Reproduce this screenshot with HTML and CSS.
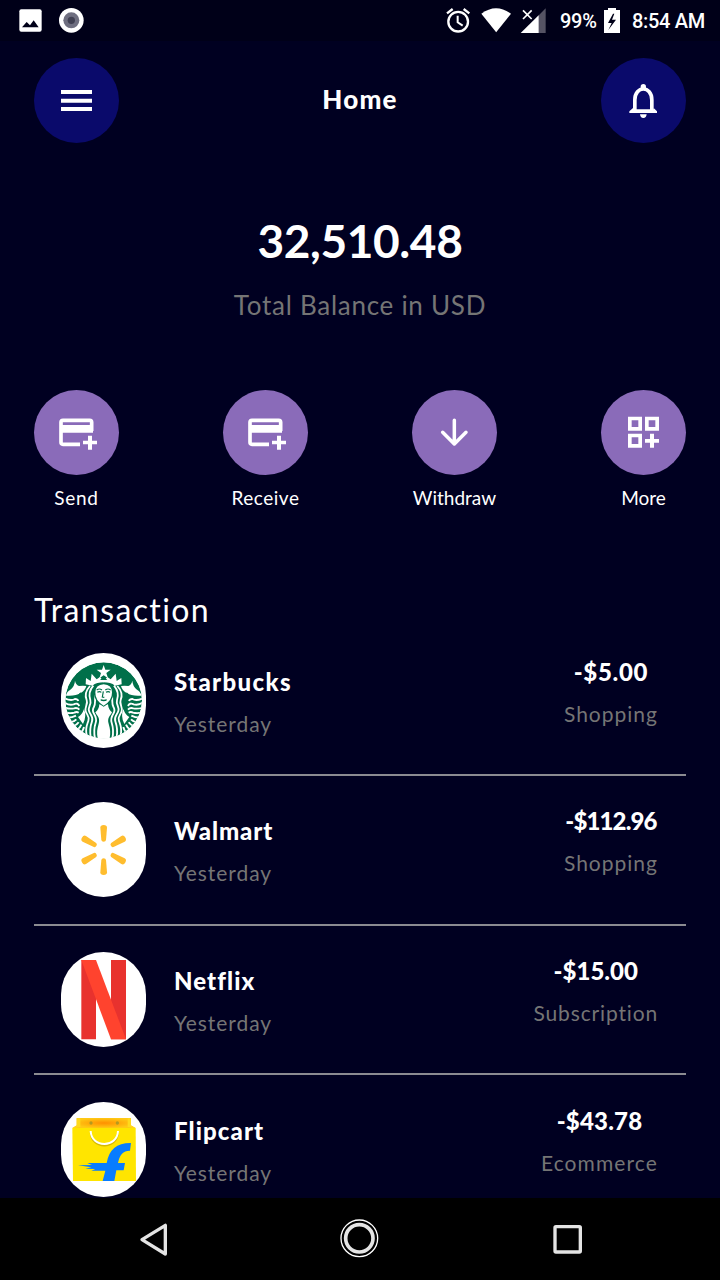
FILE: index.html
```html
<!DOCTYPE html>
<html lang="en">
<head>
<meta charset="utf-8">
<title>Home</title>
<link rel="stylesheet" href="styles.css">
</head>
<body>
<div class="phone">
  <div class="status">
    <svg class="status-left" viewBox="0 0 300 123" width="100" height="41">
      <rect x="58" y="28" width="67" height="67" rx="6" fill="#fff"/>
      <path d="M66 82l14-16 10 10 11-15 15 21z" fill="#000018"/>
      <circle cx="214" cy="61" r="37" fill="#fff"/><circle cx="214" cy="61" r="24" fill="#6f6f80"/><circle cx="214" cy="61" r="11" fill="#414153"/>
    </svg>
    <svg class="status-icons" viewBox="40 0 315 123" width="105" height="41">
      <g fill="none" stroke="#fff"><circle cx="85.500" cy="65" r="29.500" stroke-width="7"/><path d="M84 47v20l15 10" stroke-width="6"/><path d="M52 40l17-13M119 40l-17-13" stroke-width="7"/></g>
      <path d="M155 41Q199 8 244 41L199.500 97z" fill="#fff"/>
      <path d="M348 25v74h-22V47z" fill="#555364"/><path d="M273 99l54-53v53z" fill="#fff"/>
      <path d="M280 31l26 26M306 31l-26 26" stroke="#fff" stroke-width="5"/>
    </svg>
    <span class="status-text percent">99%</span>
    <svg class="battery" viewBox="522 0 48 123" width="16" height="41">
      <path d="M522 30h12v-6h24v6h12v69h-48z" fill="#fff"/><path d="M549 41l-15 28h11l-10 21 23-31h-12l7-18z" fill="#000018"/>
    </svg>
    <span class="status-text clock">8:54 AM</span>
  </div>

  <div class="header">
    <div class="round">
      <svg viewBox="102 174 255 255" width="85" height="85"><path d="M183 270h93v12h-93zM183 296h93v12h-93zM183 321h93v12h-93z" fill="#fff"/></svg>
    </div>
    <h1 class="title">Home</h1>
    <div class="round">
      <svg viewBox="513 174 255 255" width="85" height="85">
        <path d="M614.500 331V300C614.500 256 665.500 256 665.500 300V331" fill="none" stroke="#fff" stroke-width="11"/>
        <path d="M598 339v-5l11-10v4h62v-4l10 10v5zM630 343h20q-1 11-10 11t-10-11z" fill="#fff"/><path d="M632 268v-8a8 8 0 0 1 16 0v8z" fill="#fff"/>
      </svg>
    </div>
  </div>

  <div class="balance">
    <div class="amount">32,510.48</div>
    <div class="caption">Total Balance in USD</div>
  </div>

  <div class="actions">
    <div class="action">
      <div class="round violet"><svg viewBox="42 28 255 255" width="85" height="85"><path class="card" d="M180 191H129a6 6 0 0 1-6-6V125a6 6 0 0 1 6-6h80a6 6 0 0 1 6 6v26"/><path d="M120 133h99v23h-99zM204 165h12v15h15v11h-15v16h-12v-16h-15v-11h15z" fill="#fff"/></svg></div>
      <span class="label send">Send</span>
    </div>
    <div class="action">
      <div class="round violet"><svg viewBox="42 28 255 255" width="85" height="85"><path class="card" d="M180 191H129a6 6 0 0 1-6-6V125a6 6 0 0 1 6-6h80a6 6 0 0 1 6 6v26"/><path d="M120 133h99v23h-99zM204 165h12v15h15v11h-15v16h-12v-16h-15v-11h15z" fill="#fff"/></svg></div>
      <span class="label receive">Receive</span>
    </div>
    <div class="action">
      <div class="round violet"><svg viewBox="36 28 255 255" width="85" height="85"><path d="M163 119v70M128 155l35 35 35-35" fill="none" stroke="#fff" stroke-width="10.500" stroke-linecap="round" stroke-linejoin="round"/></svg></div>
      <span class="label withdraw">Withdraw</span>
    </div>
    <div class="action">
      <div class="round violet"><svg viewBox="603 28 255 255" width="85" height="85"><path d="M689.500 113.500h31v31h-31zM740.500 113.500h31v31h-31zM689.500 164.500h31v31h-31z" fill="none" stroke="#fff" stroke-width="11"/><path d="M750 159h12v16h15v11h-15v15h-12v-15h-15v-11h15z" fill="#fff"/></svg></div>
      <span class="label more">More</span>
    </div>
  </div>

  <h2 class="section">Transaction</h2>

  <div class="list">
    <div class="row">
      <svg class="logo" viewBox="33 24 255 285" preserveAspectRatio="none">
        <defs>
          <clipPath id="disc"><ellipse cx="161" cy="166" rx="115" ry="114"/></clipPath>
          <g id="half">
            <path d="M75 107q2 12 12 16 12-2 22 0-3 13-18 22-14 9-43 7 1-11 13-18 13-10 14-27z" fill="#fff"/>
            <path d="M92 142q-14 10-7 26 10 10 10 23-7 17-13 22l14 19 16-20z" fill="#00704a"/>
            <path d="M84 216q12-6 18-24 9 22-3 45z" fill="#fff"/>
            <g fill="none" stroke="#fff" stroke-width="5.500">
              <path d="M44 160q19 9 31 2 8 0 10 6"/><path d="M44 173q14 9 27 5 12-6 17 5"/><path d="M44 188q16 5 28 2 10-3 16 4"/><path d="M46 203q16 3 27 0 7-4 13 0"/><path d="M53 218q14 0 25-6"/><path d="M60 232q12-1 19-9"/><path d="M69 244q11-3 17-12"/><path d="M80 255q10-5 14-16"/><path d="M91 264q8-5 11-18"/>
              <path d="M120 123c-13 14-15 30-10 42s-7 22-3 34 13 15 8 29-10 22-5 43"/>
              <path d="M130 122c-13 15-13 32-9 44s-8 20-4 32 14 17 9 31-8 24-4 48"/>
              <path d="M136 151c-2 19 1 26-4 34s-5 13 0 21 9 15 5 27-7 24-2 48"/>
            </g>
            <path d="M162 112q-22 0-35 10l-20-4 1-19 14 9 3-22 15 17 10-7 6 7h6z" fill="#fff"/>
          </g>
        </defs>
        <rect x="33" y="24" width="255" height="285" fill="#fff"/>
        <g clip-path="url(#disc)">
          <ellipse cx="161" cy="166" rx="115" ry="114" fill="#00704a"/>
          <use href="#half"/><use href="#half" transform="matrix(-1 0 0 1 322 0)"/>
          <path d="M148 178q-1 15-12 24c6 12 15 17 10 34s-6 27-3 44h36c3-17 2-27-3-44s4-22 10-34q-11-9-12-24z" fill="#fff"/>
        </g>
        <path d="M161 60l5 14h16l-13 10 5 16-13-9-13 9 5-16-13-10h16z" fill="#fff"/>
        <path d="M150 105q11-13 22 0z" fill="#00704a"/>
        <path d="M132 142q0-27 29-28 29 1 29 28 1 28-29 43-30-15-29-43z" fill="#00704a"/>
        <path d="M136 142q0-22 25-24 25 2 25 24 1 25-25 40-26-15-25-40z" fill="#fff"/>
        <path d="M140 135q8-6 16 0M166 135q8-6 16 0M142 142q7-4 12 0M168 142q7-4 12 0M160 139l-3 17 6 1M152 164q9 5 18 0" fill="none" stroke="#00704a" stroke-width="3.500"/>
        <path d="M152 164q9 9 18 0z" fill="#00704a"/>
      </svg>
      <div class="who"><span class="name n1">Starbucks</span><span class="sub day">Yesterday</span></div>
      <div class="cost"><span class="name p1">-$5.00</span><span class="sub shop">Shopping</span></div>
    </div>
    <div class="row">
      <svg class="logo" viewBox="33 36 255 285" preserveAspectRatio="none">
        <rect x="33" y="36" width="255" height="285" fill="#fff"/>
        <defs><path id="ray" d="M151 113q0-8 10-8t10 8l-3 37q-1 5-7 5t-7-5z" fill="#ffbd2e"/></defs>
        <use href="#ray"/><use href="#ray" transform="rotate(60 161 180)"/><use href="#ray" transform="rotate(120 161 180)"/><use href="#ray" transform="rotate(180 161 180)"/><use href="#ray" transform="rotate(240 161 180)"/><use href="#ray" transform="rotate(300 161 180)"/>
      </svg>
      <div class="who"><span class="name n2">Walmart</span><span class="sub day">Yesterday</span></div>
      <div class="cost"><span class="name p2">-$112.96</span><span class="sub shop">Shopping</span></div>
    </div>
    <div class="row">
      <svg class="logo" viewBox="33 21 255 285" preserveAspectRatio="none">
        <rect x="33" y="21" width="255" height="285" fill="#fff"/>
        <path d="M94 45h44v238H94zM183 45h45v238h-45z" fill="#e8322e"/><path d="M94 45h44l90 238h-45z" fill="#ff432e"/>
      </svg>
      <div class="who"><span class="name n3">Netflix</span><span class="sub day">Yesterday</span></div>
      <div class="cost"><span class="name p3">-$15.00</span><span class="sub subscr">Subscription</span></div>
    </div>
    <div class="row">
      <svg class="logo" viewBox="33 21 255 285" preserveAspectRatio="none">
        <defs><radialGradient id="bag"><stop offset="0" stop-color="#ff9000"/><stop offset="1" stop-color="#ffc914"/></radialGradient></defs>
        <rect x="33" y="21" width="255" height="285" fill="#fff"/>
        <path d="M80 69h163v22l14 8H67l13-8z" fill="url(#bag)"/>
        <path d="M80 70v22l-13 7 24-3V70zM243 70v22l14 7-24-3V70z" fill="#ffd91c"/>
        <path d="M67 99h190l1 159H69z" fill="#ffe500"/>
        <circle cx="123" cy="84" r="5" fill="#b39a20"/><circle cx="202" cy="84" r="5" fill="#b39a20"/>
        <path d="M122 113c2 52 80 52 82 0" fill="none" stroke="#d5b900" stroke-width="5"/>
        <path d="M122 108c2 52 80 52 82 0" fill="none" stroke="#fff" stroke-width="6"/>
        <path d="M158 258l8-31h-42l12-5-30-1 18-4-40-6 42-1-14-6h58q10-61 73-60l-3 23q-29-1-36 37h21l-4 22h-22l-6 32z" fill="#087cff"/>
      </svg>
      <div class="who"><span class="name n4">Flipcart</span><span class="sub day">Yesterday</span></div>
      <div class="cost"><span class="name p4">-$43.78</span><span class="sub ecom">Ecommerce</span></div>
    </div>
  </div>

  <div class="navbar">
    <svg viewBox="0 0 1440 246" width="480" height="82" fill="none">
      <path d="M66 125l70-43v86z" stroke="#e4e4e4" stroke-width="10" stroke-linejoin="round"/>
      <circle cx="718" cy="121" r="55" stroke="#fff" stroke-width="4"/><circle cx="718" cy="121" r="41" stroke="#e4e4e4" stroke-width="11"/>
      <rect x="1305" y="86" width="76" height="76" rx="3" stroke="#e4e4e4" stroke-width="10"/>
    </svg>
  </div>
</div>
</body>
</html>
```
FILE: styles.css
```css
* { box-sizing: border-box; }
body { margin: 0; background: #000021; }
.phone {
  width: 720px; height: 1280px; overflow: hidden;
  display: flex; flex-direction: column;
  background: #000021; color: #fff;
  font-family: Lato, "Open Sans", sans-serif;
  font-variant-ligatures: none;
}
svg { display: block; flex: none; }
h1, h2 { margin: 0; }
span { white-space: nowrap; }

.status { flex: none; height: 41px; display: flex; align-items: center; background: #000018; }
.status-left { margin-right: auto; }
.status-text { font: 500 20px/41px Roboto, sans-serif; padding-top: 1px; }
.percent { margin: 0 8px 0 12px; width: 36px; letter-spacing: -0.3px; }
.clock { margin-left: 12px; width: 88px; letter-spacing: -0.3px; }

.header { flex: none; display: flex; justify-content: space-between; align-items: center; padding: 17px 34px 0; }
.round { width: 85px; height: 85px; border-radius: 50%; background: #0a0a6b; }
.title { font-size: 26px; line-height: 36px; font-weight: 900; letter-spacing: 1.2px; margin-bottom: 4px; }

.balance { flex: none; display: flex; flex-direction: column; align-items: center; padding-top: 66px; }
.amount { font-size: 46px; line-height: 64px; font-weight: 700; letter-spacing: -0.4px; }
.caption { font-size: 26px; line-height: 65px; color: #757575; letter-spacing: 0.73px; }

.actions { flex: none; display: flex; justify-content: space-between; padding: 51.500px 34px 0; }
.action { width: 85px; display: flex; flex-direction: column; align-items: center; }
.violet { background: #8a6bb9; }
.card { fill: none; stroke: #fff; stroke-width: 11; }
.label { font-size: 19px; line-height: 30px; margin-top: 8.500px; }
.send { letter-spacing: 0.7px; }
.receive { letter-spacing: 0.5px; }

.section { flex: none; font-size: 32px; line-height: 46px; font-weight: 400; padding: 74px 34px 0; height: 113.400px; letter-spacing: 1.4px; }

.list { flex: 1; min-height: 0; overflow: hidden; padding: 0 34px; }
.row {
  height: 149.700px; display: flex; align-items: flex-start;
  padding: 26.200px 28px 0 27px; border-bottom: 2px solid #8b8b91;
}
.logo { width: 85px; height: 95px; border-radius: 42.500px; }
.who, .cost { display: flex; flex-direction: column; }
.who { margin: 8px auto 0 28px; align-items: flex-start; }
.cost { margin-top: -2px; align-items: center; }
.name { font-size: 24px; line-height: 42px; font-weight: 900; }
.sub { font-size: 21px; line-height: 42px; color: #757575; }
.n1 { letter-spacing: 1.35px; }
.n2 { letter-spacing: 0.9px; }
.n3, .n4 { letter-spacing: 1.1px; }
.day { letter-spacing: 0.95px; }
.shop { letter-spacing: 1px; }
.subscr { letter-spacing: 0.85px; }
.ecom { letter-spacing: 1.1px; }
.p1 { letter-spacing: 0.7px; }
.p2 { letter-spacing: -0.85px; }
.p4 { letter-spacing: 0.2px; }

.navbar { flex: none; height: 82px; background: #000; padding-left: 120px; }
```
